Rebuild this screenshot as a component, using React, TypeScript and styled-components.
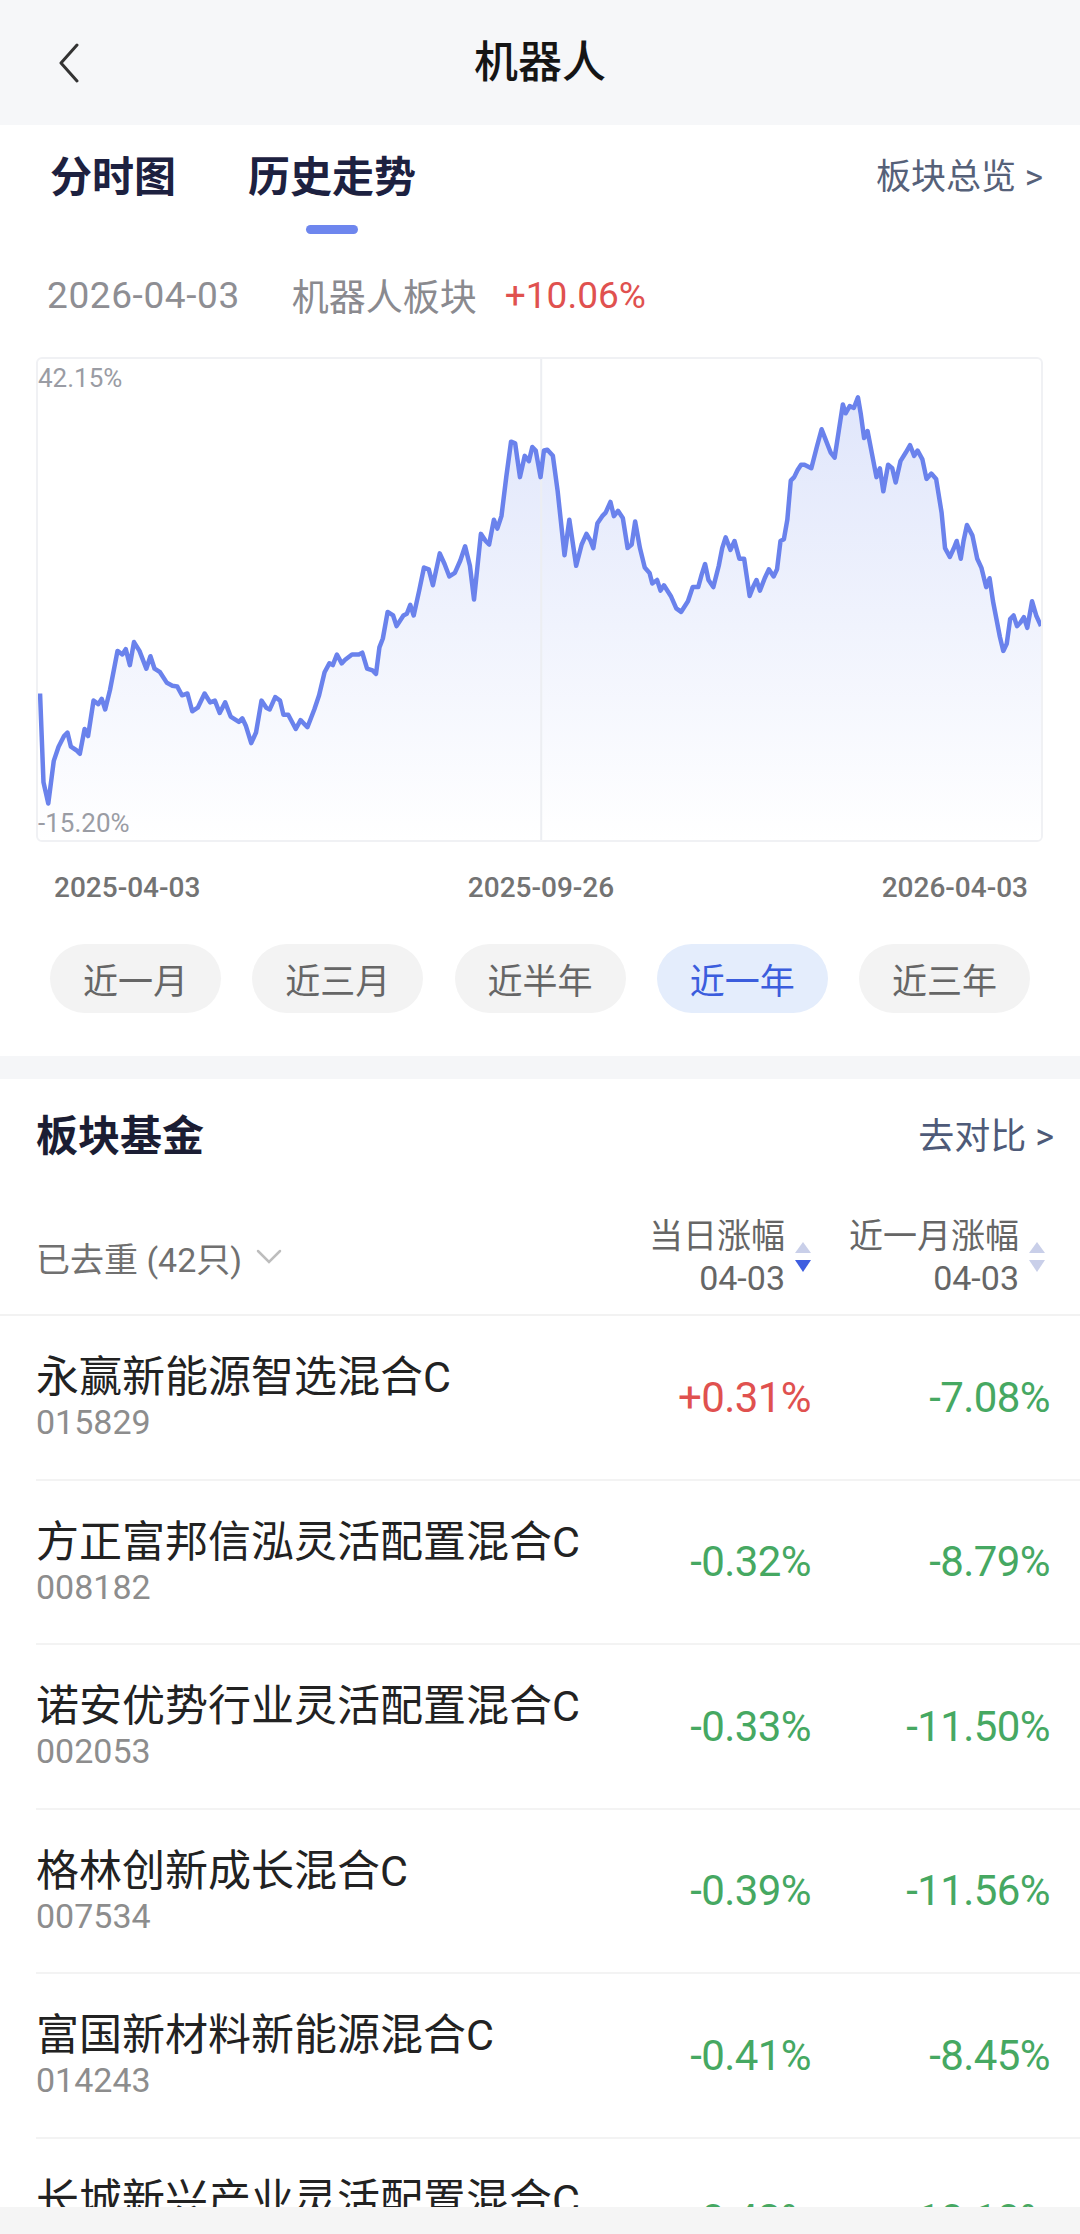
import React from "react";
import styled, { createGlobalStyle } from "styled-components";

const GlobalStyle = createGlobalStyle`
  html, body {
    margin: 0;
    padding: 0;
    background: #ffffff;
  }
  body {
    font-family: Roboto, "Noto Sans CJK SC", sans-serif;
    color: #222;
  }
  * {
    box-sizing: border-box;
  }
`;

const RED = "#e0514f";
const GREEN = "#46a862";

// chart points traced from the original, in the chart's own coordinate space
const chartPoints: [number, number][] = [
  [55, 990], [60, 1240], [67, 1300], [75, 1180], [82, 1140], [90, 1110], [95, 1100],
  [100, 1140], [108, 1150], [113, 1160], [120, 1090], [125, 1110], [133, 1010],
  [140, 1020], [145, 1005], [150, 1035], [157, 980], [168, 870], [175, 880],
  [180, 865], [186, 910], [192, 845], [200, 870], [210, 920], [216, 885],
  [222, 920], [230, 930], [240, 960], [248, 968], [255, 970], [262, 995],
  [270, 990], [277, 1040], [285, 1030], [295, 990], [303, 1015], [310, 1010],
  [317, 1045], [325, 1015], [333, 1055], [345, 1070], [350, 1060], [355, 1080],
  [363, 1130], [370, 1100], [378, 1010], [385, 1030], [390, 1035], [398, 1000],
  [405, 1010], [410, 1050], [417, 1050], [428, 1090], [435, 1065], [445, 1085],
  [455, 1035], [462, 995], [470, 930], [477, 905], [482, 910], [488, 880],
  [495, 905], [500, 895], [510, 880], [520, 880], [525, 875], [532, 920],
  [540, 925], [545, 935], [550, 860], [555, 835], [562, 760], [570, 770],
  [575, 800], [585, 770], [590, 765], [595, 740], [600, 770], [608, 700],
  [615, 635], [622, 640], [628, 685], [638, 595], [645, 625], [652, 660],
  [660, 650], [668, 615], [675, 575], [682, 630], [688, 725], [698, 540],
  [705, 560], [710, 570], [717, 500], [722, 525], [728, 490], [735, 380],
  [742, 280], [748, 285], [755, 380], [762, 320], [768, 335], [773, 295],
  [778, 305], [785, 380], [790, 305], [795, 303], [803, 320], [810, 420],
  [820, 600], [827, 500], [837, 630], [845, 570], [852, 540], [858, 560],
  [862, 580], [868, 510], [875, 490], [880, 480], [887, 450], [892, 490],
  [898, 475], [905, 495], [912, 580], [918, 570], [923, 505], [930, 580],
  [937, 635], [944, 650], [948, 680], [955, 670], [960, 700], [965, 685],
  [975, 715], [983, 750], [990, 760], [1000, 730], [1007, 690], [1015, 690],
  [1020, 655], [1025, 625], [1030, 670], [1037, 690], [1045, 630], [1050, 580],
  [1055, 550], [1062, 585], [1068, 560], [1075, 610], [1082, 610], [1090, 715],
  [1095, 690], [1100, 670], [1105, 700], [1112, 665], [1118, 640], [1125, 660],
  [1130, 640], [1135, 560], [1140, 555], [1145, 500], [1150, 390], [1155, 380],
  [1160, 360], [1165, 345], [1170, 345], [1180, 355], [1188, 295], [1195, 245],
  [1200, 270], [1208, 310], [1214, 325], [1220, 250], [1226, 175], [1230, 200],
  [1236, 180], [1242, 185], [1248, 155], [1252, 200], [1257, 270], [1262, 250],
  [1270, 330], [1275, 380], [1280, 355], [1285, 420], [1292, 345], [1298, 355],
  [1303, 395], [1310, 335], [1318, 310], [1324, 290], [1330, 320], [1335, 305],
  [1342, 330], [1348, 385], [1355, 370], [1362, 385], [1370, 480], [1375, 580],
  [1382, 605], [1388, 580], [1392, 560], [1398, 610], [1402, 560], [1407, 515],
  [1415, 545], [1422, 610], [1428, 635], [1435, 690], [1440, 665], [1445, 730],
  [1450, 780], [1455, 830], [1460, 870], [1465, 850], [1470, 780], [1475, 770],
  [1480, 800], [1485, 790], [1490, 775], [1495, 805], [1502, 730], [1508, 770],
  [1515, 800],
];

const periods = ["近一月", "近三月", "近半年", "近一年", "近三年"];

const funds = [
  { name: "永赢新能源智选混合C", code: "015829", day: "+0.31%", month: "-7.08%" },
  { name: "方正富邦信泓灵活配置混合C", code: "008182", day: "-0.32%", month: "-8.79%" },
  { name: "诺安优势行业灵活配置混合C", code: "002053", day: "-0.33%", month: "-11.50%" },
  { name: "格林创新成长混合C", code: "007534", day: "-0.39%", month: "-11.56%" },
  { name: "富国新材料新能源混合C", code: "014243", day: "-0.41%", month: "-8.45%" },
  { name: "长城新兴产业灵活配置混合C", code: "000000", day: "-0.43%", month: "-10.10%" },
];

const Page = styled.div`
  height: 100vh;
  display: flex;
  flex-direction: column;
  overflow: hidden;
`;

const Scroller = styled.div`
  flex: 1;
  overflow: hidden;
`;

const NavBar = styled.header`
  height: 125px;
  background: #f6f7f9;
  display: grid;
  grid-template-columns: 1fr auto 1fr;
  align-items: center;
`;

const BackButton = styled.div`
  padding-left: 57px;
  display: flex;
  align-items: center;
  height: 40px;
`;

const Title = styled.h1`
  margin: 0;
  font-size: 44px;
  font-weight: 500;
  line-height: 56px;
  color: #151515;
`;

const TopSection = styled.section`
  padding: 0 37px 43px 36px;
  background: #fff;
`;

const TabBar = styled.div`
  display: flex;
  align-items: flex-start;
  padding: 28px 0 0 14px;
`;

const Tab = styled.div<{ $active?: boolean }>`
  display: flex;
  flex-direction: column;
  align-items: center;
  margin-right: 72px;
  font-size: 42px;
  font-weight: 700;
  line-height: 50px;
  color: #1d2140;

  &::after {
    content: "";
    width: 52px;
    height: 9px;
    margin-top: 22px;
    border-radius: 5px;
    background: ${(p) => (p.$active ? "#6e86ee" : "transparent")};
  }
`;

const MoreLink = styled.div`
  margin-left: auto;
  font-size: 35px;
  line-height: 50px;
  color: #566179;
`;

const DateRow = styled.div`
  display: flex;
  align-items: center;
  height: 44px;
  margin-top: 39px;
  padding-left: 11px;
  font-size: 37px;
`;

const DateText = styled.span`
  color: #8e8e93;
  margin-right: 52px;
  letter-spacing: 0.6px;
`;

const SectorName = styled.span`
  color: #8a8a8f;
  margin-right: 28px;
`;

const Change = styled.span<{ $up: boolean }>`
  color: ${(p) => (p.$up ? RED : GREEN)};
`;

const ChartBox = styled.div`
  position: relative;
  margin-top: 40px;
  height: 485px;
  border: 2px solid #f0f1f4;
  border-radius: 6px;
  overflow: hidden;

  svg {
    display: block;
    width: 100%;
    height: 100%;
  }
`;

const AxisValue = styled.span<{ $bottom?: boolean }>`
  position: absolute;
  left: 0;
  ${(p) => (p.$bottom ? "bottom: 2px;" : "top: 4px;")}
  font-size: 26px;
  line-height: 30px;
  color: #9a9ca4;
`;

const AxisRow = styled.div`
  display: flex;
  justify-content: space-between;
  margin-top: 31px;
  padding: 0 15px 0 18px;
  font-size: 28px;
  font-weight: 500;
  line-height: 30px;
  color: #737373;
`;

const PeriodRow = styled.div`
  display: flex;
  justify-content: space-between;
  margin-top: 41px;
  padding: 0 13px 0 14px;
`;

const Pill = styled.div<{ $active?: boolean }>`
  width: 171px;
  height: 69px;
  border-radius: 35px;
  display: flex;
  align-items: center;
  justify-content: center;
  font-size: 35px;
  background: ${(p) => (p.$active ? "#e4edfc" : "#f3f3f3")};
  color: ${(p) => (p.$active ? "#3b5ddd" : "#666")};
`;

const Band = styled.div`
  height: 23px;
  background: #f5f6f8;
`;

const FundHead = styled.div`
  display: flex;
  align-items: center;
  justify-content: space-between;
  padding: 30px 26px 0 36px;
`;

const SectionTitle = styled.h2`
  margin: 0;
  font-size: 42px;
  font-weight: 700;
  line-height: 56px;
  color: #1b1d33;
`;

const CompareLink = styled.div`
  font-size: 36px;
  line-height: 56px;
  color: #4e5a78;
`;

const ColumnHead = styled.div`
  display: grid;
  grid-template-columns: minmax(0, 1fr) 230px 239px;
  align-items: center;
  padding: 50px 30px 15px 36px;
  border-bottom: 2px solid #f2f2f2;
`;

const Dedupe = styled.div`
  display: flex;
  align-items: center;
  font-size: 34px;
  color: #707070;

  svg {
    margin-left: 14px;
  }
`;

const HeaderCell = styled.div<{ $inset?: number }>`
  display: flex;
  justify-content: flex-end;
  align-items: center;
  padding-right: ${(p) => p.$inset ?? 0}px;
`;

const HeaderLabel = styled.div`
  text-align: right;
  font-size: 34px;
  line-height: 42px;
  color: #666;
`;

const SortIcon = styled.svg`
  margin-left: 10px;
  flex-shrink: 0;
`;

const FundRow = styled.div`
  display: grid;
  grid-template-columns: minmax(0, 1fr) 230px 239px;
  align-items: center;
  height: 164.5px;
  margin-left: 36px;
  padding-right: 30px;
  border-bottom: 2px solid #f3f3f3;
`;

const FundInfo = styled.div`
  display: flex;
  flex-direction: column;
  white-space: nowrap;
`;

const FundName = styled.div`
  font-size: 43px;
  line-height: 50px;
  color: #222;
`;

const FundCode = styled.div`
  font-size: 34px;
  line-height: 40px;
  color: #8d8d8d;
`;

const Value = styled.div<{ $up: boolean }>`
  text-align: right;
  font-size: 42px;
  letter-spacing: -0.6px;
  color: ${(p) => (p.$up ? RED : GREEN)};
`;

const BottomBar = styled.div`
  height: 27px;
  flex-shrink: 0;
  background: #f5f5f5;
`;

const BackIcon = () => (
  <svg width="24" height="40" viewBox="0 0 24 40">
    <path d="M20 2 L4 20 L20 38" fill="none" stroke="#333" strokeWidth="3" strokeLinecap="round" strokeLinejoin="round" />
  </svg>
);

const ChevronDown = () => (
  <svg width="26" height="16" viewBox="0 0 26 16">
    <path d="M2 2 L13 13 L24 2" fill="none" stroke="#bdbdbd" strokeWidth="2.5" strokeLinecap="round" />
  </svg>
);

const SortArrows: React.FC<{ active?: boolean }> = ({ active }) => (
  <SortIcon width="16" height="32" viewBox="0 0 16 32">
    <polygon points="0,12 8,1 16,12" fill="#c9cfe9" />
    <polygon points="0,19 16,19 8,31" fill={active ? "#3f5ee0" : "#c9cfe9"} />
  </SortIcon>
);

const TrendChart = () => {
  const line = chartPoints.map((p, i) => `${i ? "L" : "M"}${p[0]} ${p[1]}`).join(" ");
  const area = `${line} L1515 1403 L55 1403 Z`;
  return (
    <ChartBox>
      <svg viewBox="52 47 1463 1356" preserveAspectRatio="none">
        <defs>
          <linearGradient id="trendFill" x1="0" y1="0" x2="0" y2="1">
            <stop offset="0" stopColor="#e0e6fb" />
            <stop offset="1" stopColor="#ffffff" />
          </linearGradient>
        </defs>
        <path d={area} fill="url(#trendFill)" />
        <line x1="786" y1="47" x2="786" y2="1403" stroke="#eceef2" strokeWidth="2" vectorEffect="non-scaling-stroke" />
        <path
          d={line}
          fill="none"
          stroke="#6a82ec"
          strokeWidth="4.5"
          strokeLinejoin="round"
          vectorEffect="non-scaling-stroke"
        />
      </svg>
      <AxisValue>42.15%</AxisValue>
      <AxisValue $bottom>-15.20%</AxisValue>
    </ChartBox>
  );
};

const App: React.FC = () => {
  const [period, setPeriod] = React.useState("近一年");

  return (
    <Page>
      <GlobalStyle />
      <Scroller>
        <NavBar>
          <BackButton>
            <BackIcon />
          </BackButton>
          <Title>机器人</Title>
          <div />
        </NavBar>

        <TopSection>
          <TabBar>
            <Tab>分时图</Tab>
            <Tab $active>历史走势</Tab>
            <MoreLink>板块总览 &gt;</MoreLink>
          </TabBar>

          <DateRow>
            <DateText>2026-04-03</DateText>
            <SectorName>机器人板块</SectorName>
            <Change $up>+10.06%</Change>
          </DateRow>

          <TrendChart />

          <AxisRow>
            <span>2025-04-03</span>
            <span>2025-09-26</span>
            <span>2026-04-03</span>
          </AxisRow>

          <PeriodRow>
            {periods.map((p) => (
              <Pill key={p} $active={p === period} onClick={() => setPeriod(p)}>
                {p}
              </Pill>
            ))}
          </PeriodRow>
        </TopSection>

        <Band />

        <FundHead>
          <SectionTitle>板块基金</SectionTitle>
          <CompareLink>去对比 &gt;</CompareLink>
        </FundHead>

        <ColumnHead>
          <Dedupe>
            已去重 (42只)
            <ChevronDown />
          </Dedupe>
          <HeaderCell>
            <HeaderLabel>
              当日涨幅
              <br />
              04-03
            </HeaderLabel>
            <SortArrows active />
          </HeaderCell>
          <HeaderCell $inset={5}>
            <HeaderLabel>
              近一月涨幅
              <br />
              04-03
            </HeaderLabel>
            <SortArrows />
          </HeaderCell>
        </ColumnHead>

        {funds.map((f) => (
          <FundRow key={f.name}>
            <FundInfo>
              <FundName>{f.name}</FundName>
              <FundCode>{f.code}</FundCode>
            </FundInfo>
            <Value $up={f.day.startsWith("+")}>{f.day}</Value>
            <Value $up={f.month.startsWith("+")}>{f.month}</Value>
          </FundRow>
        ))}
      </Scroller>
      <BottomBar />
    </Page>
  );
};

export default App;
